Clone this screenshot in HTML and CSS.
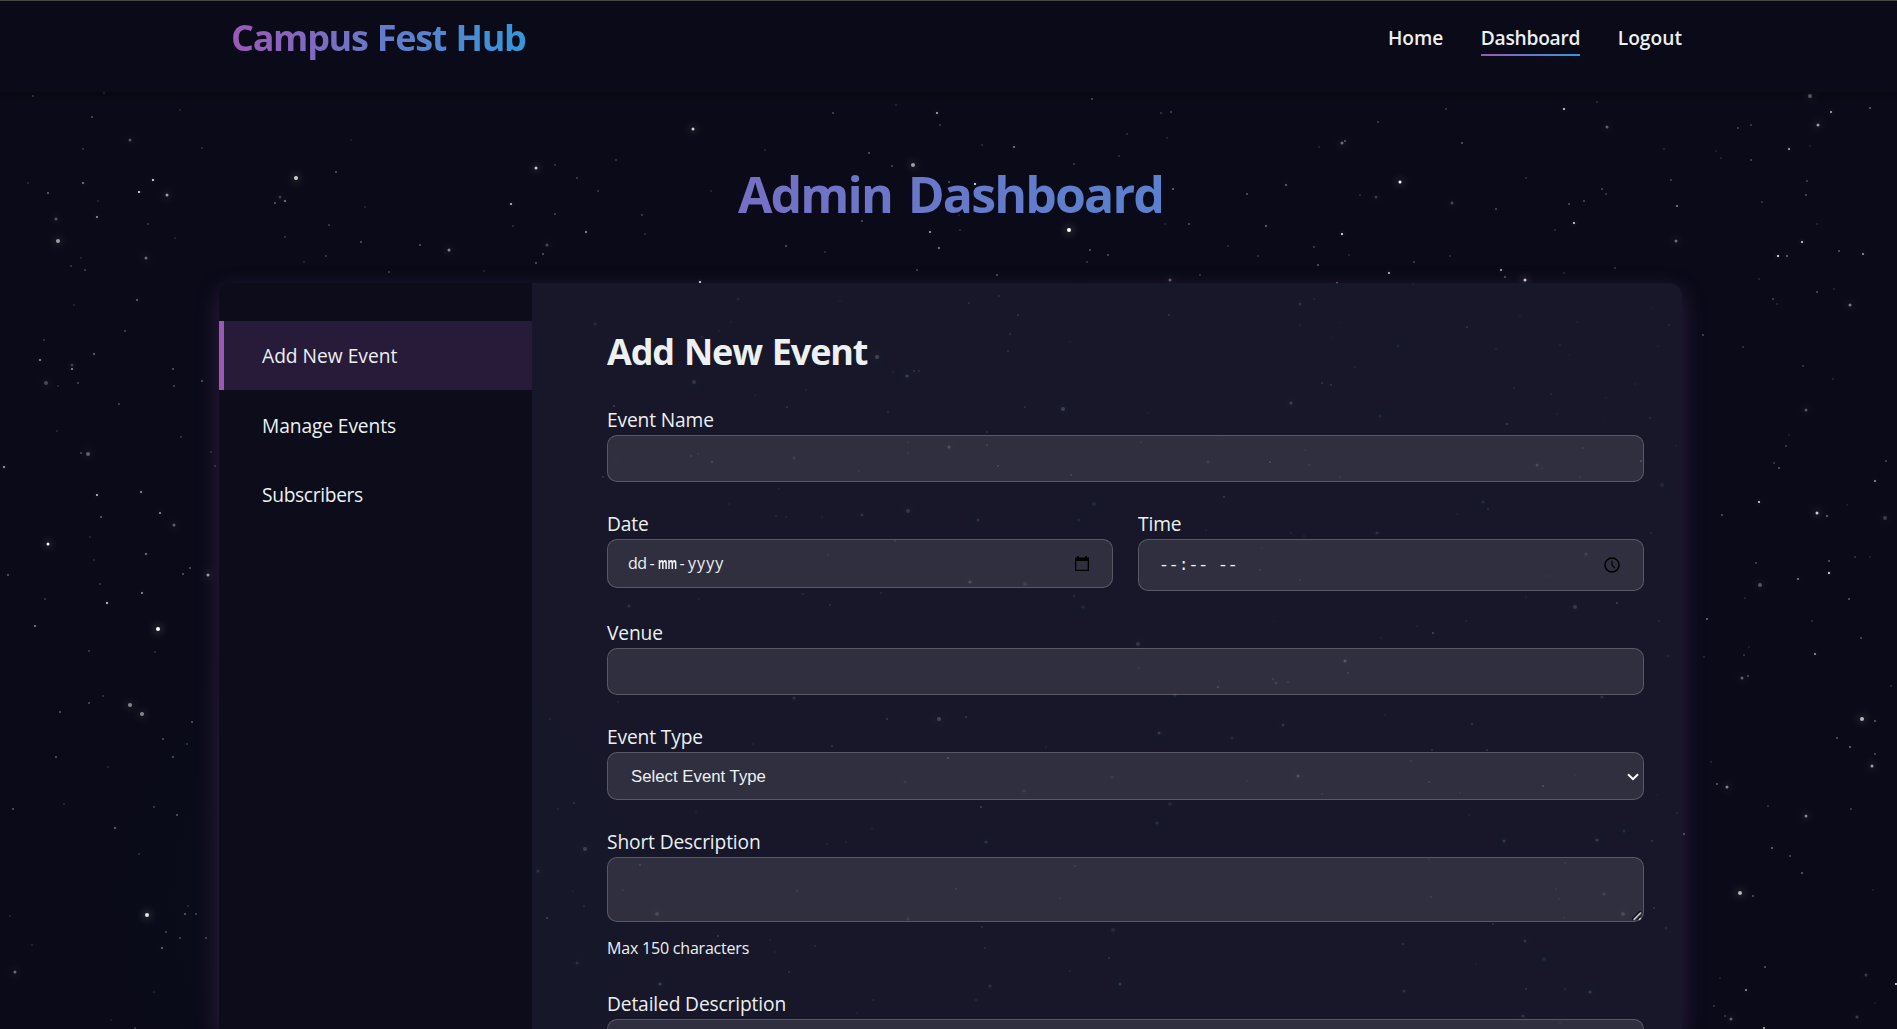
FILE: index.html
```html
<!DOCTYPE html>
<html lang="en">
<head>
<meta charset="utf-8">
<title>Admin Dashboard - Campus Fest Hub</title>
<link rel="stylesheet" href="styles.css">
</head>
<body>
<div class="stars" id="stars" aria-hidden="true"></div>
<header class="site-header">
  <span class="logo">Campus Fest Hub</span>
  <nav class="nav">
    <a class="nav-link nav-home">Home</a>
    <a class="nav-link nav-dash is-active">Dashboard</a>
    <a class="nav-link nav-out">Logout</a>
  </nav>
</header>
<main class="page">
  <h1 class="page-title"><span class="page-title-text">Admin Dashboard</span></h1>
  <div class="dashboard">
    <aside class="sidebar">
      <a class="side-link is-active">Add New Event</a>
      <a class="side-link">Manage Events</a>
      <a class="side-link side-subs">Subscribers</a>
    </aside>
    <section class="content">
      <h2 class="section-title">Add New Event</h2>
      <form class="form">
        <div class="field">
          <label class="label">Event Name</label>
          <input class="control" type="text">
        </div>
        <div class="row">
          <div class="field">
            <label class="label">Date</label>
            <div class="control picker date">
              <span class="date-text"><span class="dd">dd</span><span class="sep">-</span><span class="mm">mm</span><span class="sep">-</span><span class="yy">yyyy</span></span>
              <svg class="cal" viewBox="0 0 14 15"><path d="M3 0v3M11 0v3" stroke="#000" stroke-width="1.6"/><path d="M0 1.6h14V15H0zM1.3 5v8.7h11.4V5z" fill="#000" fill-rule="evenodd"/></svg>
            </div>
          </div>
          <div class="field">
            <label class="label">Time</label>
            <div class="control picker time">
              <span class="time-text">--:-- --</span>
              <svg class="clock" viewBox="0 0 16 16"><circle cx="8" cy="8" r="7" fill="none" stroke="#000" stroke-width="1.5"/><path d="M8 3.8V8.3L11 11" fill="none" stroke="#000" stroke-width="1.2"/></svg>
            </div>
          </div>
        </div>
        <div class="field">
          <label class="label">Venue</label>
          <input class="control" type="text">
        </div>
        <div class="field">
          <label class="label">Event Type</label>
          <div class="control select">
            <span>Select Event Type</span>
            <svg class="chevron" viewBox="0 0 12 8"><path d="M1 1.2L6 6.2L11 1.2" fill="none" stroke="#fff" stroke-width="2"/></svg>
          </div>
        </div>
        <div class="field field-short">
          <label class="label">Short Description</label>
          <div class="area-wrap">
            <textarea class="control area"></textarea>
            <svg class="grip" viewBox="0 0 10 10"><path d="M0 8.5L8.5 0M5.5 8.5L8.5 5.5" stroke="#0c0c14" stroke-width="1.3"/><path d="M1.6 8.9L8.9 1.6M7 8.9L8.9 7" stroke="#c4c4c8" stroke-width="1.5"/></svg>
          </div>
          <small class="hint">Max 150 characters</small>
        </div>
        <div class="field">
          <label class="label">Detailed Description</label>
          <textarea class="control area area-tall"></textarea>
        </div>
      </form>
    </section>
  </div>
</main>
<script src="stars.js"></script>
</body>
</html>
```

FILE: styles.css
```css
* { box-sizing: border-box; }
html { height: 100%; overflow: hidden; }
body {
  margin: 0;
  height: 100%;
  overflow: hidden;
  background:
    radial-gradient(circle at 380px 900px, rgba(12, 34, 44, .2), rgba(12, 34, 44, 0) 320px),
    #0a0a18;
  color: #ecf0f1;
  font-family: "Segoe UI", "Open Sans", "Noto Sans", sans-serif;
}
.stars { position: absolute; inset: 0; overflow: hidden; z-index: -1; }
.star { position: absolute; background: #fff; transform: translate(-50%, -50%); }
.star.round { border-radius: 50%; box-shadow: 0 0 8px 1px rgba(255, 255, 255, .38); }

.site-header {
  display: flex;
  justify-content: space-between;
  height: 92px;
  padding: 13px 215px 0 231px;
  border-top: 1px solid #474747;
  background: #0a0a18;
  box-shadow: 0 2px 7px rgba(6, 6, 14, .4);
}
.logo {
  height: 48px;
  font-size: 36px;
  line-height: 48px;
  letter-spacing: -1.3px;
  word-spacing: 1.2px;
  font-weight: 700;
  white-space: nowrap;
  background: linear-gradient(90deg, #9b59b6, #3498db);
  -webkit-background-clip: text;
  background-clip: text;
  color: transparent;
}
.nav { display: flex; gap: 37.5px; }
.nav-link {
  height: 42px;
  line-height: 48px;
  font-size: 19.2px;
  font-weight: 600;
  white-space: nowrap;
}
.nav-home { letter-spacing: -.05px; }
.nav-dash {
  letter-spacing: -.25px;
  border-bottom: 2px solid;
  border-image: linear-gradient(90deg, #9b59b6, #3498db) 1;
}

.page { padding: 0 215px 0 219px; }
.page-title {
  margin: 0;
  padding-top: 68px;
  height: 191px;
  font-size: 50px;
  line-height: 68px;
  letter-spacing: -1.85px;
  word-spacing: 4.5px;
  font-weight: 700;
  text-align: center;
}
.page-title-text {
  display: block;
  background: linear-gradient(90deg, #9b59b6, #3498db);
  -webkit-background-clip: text;
  background-clip: text;
  color: transparent;
}
.dashboard {
  display: flex;
  height: 746px;
  border-radius: 12px 12px 0 0;
  overflow: hidden;
  background: rgba(26, 26, 46, .8);
  box-shadow: 0 8px 24px rgba(155, 89, 182, .26);
}
.sidebar { width: 313px; flex: none; padding-top: 38px; background: rgba(10, 10, 24, .82); }
.side-link {
  display: block;
  height: 69.4px;
  padding-left: 38px;
  border-left: 5px solid transparent;
  font-size: 19.2px;
  line-height: 70px;
}
.side-link + .side-link { line-height: 71px; letter-spacing: -.1px; }
.side-link.side-subs { line-height: 70px; letter-spacing: -.33px; }
.side-link.is-active { background: rgba(155, 89, 182, .2); border-left-color: #9b59b6; }
.content { flex: 1; padding: 42px 38px 0 75px; }
.section-title {
  margin: 0 0 30px;
  font-size: 36px;
  line-height: 53px;
  height: 52px;
  letter-spacing: -1.15px;
  word-spacing: 1.8px;
  font-weight: 700;
  white-space: nowrap;
}
.form { display: flex; flex-direction: column; gap: 29px; }
.row { display: grid; grid-template-columns: 1fr 1fr; gap: 25px; align-items: start; }
.field { display: flex; flex-direction: column; }
.label { height: 28px; line-height: 26px; font-size: 19.2px; letter-spacing: -.14px; white-space: nowrap; }
.control {
  display: block;
  width: 100%;
  height: 47px;
  margin: 0;
  padding: 0 20px;
  border: 1px solid rgba(255, 255, 255, .2);
  border-radius: 10px;
  background: rgba(255, 250, 248, .11);
  color: #ecf0f1;
  outline: none;
}
.picker { display: flex; align-items: center; justify-content: space-between; }
.date { height: 49px; }
.date-text { display: flex; font-size: 16px; line-height: 20px; font-weight: 500; margin-top: -2px; }
.dd { width: 18px; letter-spacing: -.6px; }
.mm { width: 18px; transform: scaleX(.61); transform-origin: 0 0; font-weight: 700; }
.yy { letter-spacing: 1.1px; }
.sep { width: 12px; text-align: center; }
.cal { width: 14px; height: 15px; margin-right: 3px; }
.time { height: 52px; }
.time-text { font-family: "Liberation Mono", monospace; font-size: 16.4px; white-space: pre; }
.clock { width: 16px; height: 16px; margin-right: 3px; }
.select {
  display: flex;
  align-items: center;
  justify-content: space-between;
  height: 48px;
  padding: 1px 4px 0 23px;
  font-family: "Liberation Sans", Arial, sans-serif;
  font-size: 16.8px;
}
.chevron { width: 12px; height: 8px; margin-top: 1px; }
.area-wrap { position: relative; }
.area { height: 65px; resize: none; }
.area-tall { height: 120px; }
.grip { position: absolute; right: 2px; bottom: 1px; width: 10px; height: 10px; }
.hint { height: 40px; padding-top: 14px; font-size: 16px; line-height: 24px; letter-spacing: -.2px; white-space: nowrap; }
```

FILE: stars.js
```js
// Star field: x, y, size, opacity
const field = `
33 96 1 .7;104 93 2 .15;92 117 1 .9;180 110 1 .4;130 140 3 .3;83 149 1 .6;202 148 1 .5;351 140 1 .3;28 183 1 .5;48 193 2 .4;83 183 2 .5;153 180 2 1;139 192 2 1;167 195 3 .6;98 201 1 .4;97 217 2 .6;56 219 3 .3;58 241 4 .6;148 224 2 .2;175 238 1 .4;146 258 3 .4;81 258 1 .4;71 266 1 .6;85 270 2 .25;296 178 4 .8;336 172 1 1;280 197 3 .2;275 203 1 1;285 201 2 .5;365 207 1 .4;329 225 1 .7;285 237 1 .6;361 242 1 1;420 245 1 1;449 250 3 .5;326 256 1 .7;304 262 1 .4;389 272 1 .7;484 271 1 .4;536 168 3 .8;555 165 1 .6;577 178 1 .7;598 191 1 .6;616 160 2 .2;511 204 2 .8;555 214 1 .8;513 226 1 .5;586 232 2 .6;547 245 3 .25;543 254 1 1;536 263 1 1;137 300 2 .4;74 305 1 .4;125 331 1 .8;44 340 1 .6;
896 105 1 .4;833 113 1 .8;937 113 2 .7;940 125 2 .2;693 129 3 .8;765 150 1 .4;869 153 1 1;982 145 1 .5;1014 147 2 .5;892 166 1 .8;913 165 4 .6;1092 99 1 .9;1161 113 1 .6;1171 112 2 .25;1127 134 1 .5;1167 138 1 .4;1119 156 1 .5;1074 164 1 .6;949 182 2 .3;975 184 2 1;711 191 1 .4;642 215 1 .7;645 234 1 .5;1173 189 2 .4;1247 194 1 1;862 221 1 .9;930 232 2 .7;939 248 2 .5;960 230 1 .5;959 215 1 .4;1069 230 4 1;1165 224 1 .4;1189 224 2 .3;1266 226 2 .4;1090 250 1 1;1108 255 2 .3;1087 262 1 .6;1228 246 1 .5;1258 256 1 .6;786 246 2 .3;825 252 1 .5;917 270 2 .25;997 275 1 .9;1200 275 1 .6;1170 280 3 .35;700 282 2 1;
1378 122 1 .7;1342 143 3 .4;1345 141 1 1;1319 147 1 .4;1446 109 2 .2;1462 143 1 1;1564 109 2 .9;1597 102 2 .15;1607 127 3 .35;1400 182 3 1;1286 185 2 .4;1360 195 1 .5;1376 197 3 .2;1452 203 3 .25;1496 209 2 .3;1526 178 1 .5;1342 234 2 1;1314 247 1 .7;1349 255 1 .4;1318 265 1 1;1389 273 2 .8;1414 262 1 .7;1450 256 1 .5;1501 270 2 .7;1505 277 2 .3;1525 280 3 .8;1337 283 2 .4;1413 284 2 .2;1564 273 1 .4;1555 230 1 .5;1574 223 2 .9;1569 204 1 .9;1584 201 1 .9;1602 189 1 .8;1606 194 2 .2;1615 268 1 .6;1664 149 1 .4;1671 180 1 .7;1677 206 2 .5;1676 241 3 .4;1716 151 1 .3;1721 158 1 .4;1738 128 1 .8;1751 125 1 .7;1751 160 1 .8;1762 202 1 .6;1789 149 2 .7;1810 96 4 .35;1818 125 3 .6;1831 112 2 .7;1870 108 2 .35;1810 146 1 .3;1807 181 2 .25;1806 195 1 .9;1817 224 1 .4;1802 242 2 .9;1778 256 2 1;1787 256 2 .4;1839 251 1 1;1863 254 2 .6;1759 279 1 .4;1834 289 1 .4;1817 292 1 .9;1773 299 2 .25;1777 304 1 .4;1850 305 3 .45;1703 335 1 .8;1743 347 1 .6;
40 360 2 .6;94 354 2 .4;72 365 3 .2;72 369 2 .6;46 383 4 .25;58 386 2 .15;78 383 1 .8;119 404 1 .8;173 369 1 1;174 386 1 .8;202 381 1 1;57 431 1 .4;181 437 1 .6;81 453 1 .8;88 454 4 .35;4 467 2 .7;211 452 1 .5;215 466 1 .6;97 495 2 .8;141 492 2 .6;101 517 2 .35;160 513 2 .6;174 525 3 .35;90 537 1 .4;48 544 3 1;146 554 2 .5;94 560 1 .4;8 575 2 .35;183 574 1 1;190 568 1 1;208 575 3 .6;100 584 1 .6;142 593 2 .6;45 599 1 .6;107 603 2 .9;35 626 2 .5;158 629 4 1;89 651 1 .7;155 652 1 .5;103 696 2 .2;130 705 4 .5;142 714 4 .5;89 703 1 .9;60 712 1 1;192 722 1 1;163 739 1 .9;187 744 1 .6;173 757 2 .3;56 757 1 1;108 767 1 .4;64 804 1 .5;154 807 1 .7;13 809 1 1;177 815 1 1;115 828 2 .4;139 854 1 .5;188 906 1 .4;10 916 1 .4;147 915 4 .9;185 914 2 .35;196 914 1 .8;166 932 1 .8;180 938 2 .25;206 938 1 .8;32 945 1 .4;162 948 2 .4;15 972 3 .4;154 992 1 .3;111 1020 1 .3;135 1028 1 .6;
1803 366 1 .6;1833 379 1 .4;1806 410 3 .3;1789 435 1 .3;1786 446 1 .7;1774 463 2 .2;1779 468 1 1;1886 461 1 .8;1875 481 2 .6;1759 502 2 .9;1722 515 1 1;1817 513 3 .8;1827 516 2 .4;1847 505 1 .3;1885 518 4 .2;1756 563 1 .8;1829 561 1 1;1829 573 2 1;1798 579 2 .5;1760 585 4 .3;1855 557 1 .6;1870 557 1 .3;1745 598 1 .4;1849 599 1 1;1707 619 2 .4;1812 621 1 .5;1861 638 1 .9;1749 647 1 .3;1744 655 1 .6;1704 657 1 .4;1815 654 2 .6;1742 678 3 .35;1748 676 1 .9;1891 686 1 .5;1862 719 4 .7;1875 721 2 .35;1837 738 1 1;1850 747 2 .4;1875 754 1 .9;1872 766 3 .6;1711 762 1 .4;1717 784 2 .35;1727 787 3 .5;1768 806 2 .2;1851 809 1 .7;1806 816 3 .5;1684 834 1 1;1772 848 2 .4;1790 856 1 .9;1802 873 2 .35;1740 893 4 .7;1753 896 1 .9;1873 890 1 .3;1765 967 1 1;1866 975 3 .2;1720 978 1 .3;1746 990 2 .6;1714 1006 1 .6;1725 1016 1 .6;1731 1019 3 .35;1857 1017 3 .2;1764 1028 2 .7;1875 1003 1 .2;1896 984 2 1;
`;

// Stars that sit behind the form panel
const panel = `
738 299 3 .3;840 301 1 .7;999 296 2 .4;969 303 2 .5;1018 315 2 .6;1169 315 2 .6;1080 288 1 .5;731 322 1 .5;1300 304 3 .5;1314 299 2 .3;1520 316 1 .7;1652 308 1 .4;
1300 325 1 .7;1340 323 1 .4;1332 338 1 .4;1432 332 1 .4;1467 327 2 .6;1577 322 2 .2;1669 325 2 .3;1398 346 3 .3;1496 349 1 .9;1560 345 1 1;1569 355 1 .4;1658 346 1 .5;1355 367 1 .9;1454 376 1 .3;1514 388 2 .3;1322 383 2 .6;1331 385 2 .6;1291 403 3 .8;1380 416 3 .3;1551 394 1 1;1606 398 1 .5;1635 384 1 .7;1557 414 2 .2;1507 424 2 .8;1604 422 1 .3;1219 440 1 .5;1208 462 3 .4;1270 462 2 .7;1305 450 1 .6;1309 465 1 1;1340 477 1 .8;1394 448 1 .5;1537 465 3 .6;1542 468 1 .7;1583 448 1 1;1580 477 1 .8;1641 461 2 .8;1224 497 2 .7;1483 502 3 .4;
1650 418 2 .4;1662 485 4 .3;1676 446 2 .2;1651 533 2 .3;1659 621 2 .3;1668 656 3 .25;1657 795 1 .4;1652 841 2 .6;1654 908 2 .6;1666 928 3 .3;
595 324 3 .4;719 331 1 .7;702 337 2 .5;877 357 4 .9;907 376 3 .8;914 371 2 .6;919 371 2 .5;694 382 4 .6;755 395 1 .6;806 390 1 .9;787 407 2 .6;888 412 2 .4;1063 409 4 .8;1025 407 2 .5;1148 413 1 .5;1008 351 2 .5;1010 334 2 .5;1070 342 1 .5;614 406 2 .8;893 372 1 .9;949 447 3 .8;987 445 2 .6;987 432 2 .4;998 466 2 .6;1071 475 2 .6;908 442 1 .8;908 453 1 .8;1141 442 1 .9;859 471 1 .8;794 458 3 .4;712 462 2 .7;698 454 1 .8;691 456 2 .4;616 462 1 .5;603 477 2 .6;779 489 1 .8;729 504 1 .7;862 515 3 .5;908 511 4 .6;978 520 3 .5;1094 504 4 .35;1079 520 3 .3;822 517 1 .7;786 517 2 .3;776 516 2 .3;895 541 2 .5;828 555 1 .8;970 582 3 .8;1025 584 4 .4;881 593 2 .4;803 594 2 .4;830 605 2 .5;1074 596 2 .5;1083 607 3 .4;629 606 3 .5;699 599 1 .7;
1377 533 3 .5;1488 509 2 .4;1457 514 1 .7;1291 533 1 .8;1304 536 1 .9;1206 530 1 .6;1586 554 3 .5;1549 576 1 .6;1262 548 2 .2;1260 570 2 .5;1300 580 2 .4;1575 607 4 .7;1617 603 2 .8;1526 597 1 .7;1433 633 2 1;1466 621 1 .9;1417 626 1 .8;1381 638 1 .8;1138 644 4 .6;1274 621 1 .4;1345 661 3 .9;1348 673 2 .6;1139 668 1 .9;1218 687 2 .8;1219 681 1 .5;1273 679 2 .5;1276 683 3 .4;1288 682 2 .4;1175 695 3 .4;1602 697 3 .5;1385 715 1 .8;1283 725 3 .6;1472 724 2 .6;1159 733 3 .7;1232 738 3 .4;1432 750 2 .5;1487 750 2 .6;1411 761 2 .5;1298 776 3 .8;1247 781 1 .7;1322 794 1 .8;1429 782 2 .5;1460 793 1 1;1543 786 2 .8;1575 775 1 .7;1170 804 4 .3;1157 823 3 .5;1469 815 1 .7;1677 813 1 1;
794 698 3 .5;887 719 2 .7;939 719 4 .9;966 717 2 .7;618 702 1 .9;753 744 1 .8;832 746 2 .6;1046 747 1 .8;948 758 2 .9;1112 777 3 .3;905 782 3 .3;1024 791 3 .4;653 773 3 .5;696 812 1 .8;981 807 2 .8;872 829 1 .8;846 842 1 .9;986 842 3 .6;827 844 2 .4;640 865 2 .6;1075 866 2 .4;956 889 2 .4;797 891 3 .3;657 914 4 .6;623 890 2 .3;908 919 3 .4;1060 898 1 .8;1113 930 4 .35;982 927 2 .5;718 936 2 .7;815 946 2 .4;770 940 1 .8;775 952 1 .7;985 948 2 .5;1109 958 2 .6;789 972 2 .5;660 984 3 .8;990 986 3 .5;1120 984 3 .7;873 1000 2 .3;976 1000 2 .4;1070 971 1 .9;857 1013 1 .7;
1504 841 3 .7;1597 840 3 .7;1624 831 3 .4;1429 859 1 .7;1565 863 1 .8;1556 889 1 .8;1559 899 1 .8;1604 894 3 .5;1623 914 4 .6;1564 918 1 .7;1431 897 2 .4;1525 941 3 .6;1544 959 4 .3;1476 964 1 .7;1526 989 2 .6;1565 989 3 .2;1590 992 3 .7;1404 991 3 .5;1523 1016 3 .6;1560 1023 1 .7;1403 944 2 .6;1493 924 2 .5;
585 849 4 .8;538 871 3 .5;547 918 2 .9;577 963 3 .5;574 803 2 .6;558 809 1 .8;550 719 2 .3;573 891 1 .6;584 906 2 .4;
`;

const host = document.getElementById("stars");
(field + panel).split(";").forEach((entry) => {
  const [x, y, size, alpha] = entry.trim().split(/\s+/).map(Number);
  if (!size) return;
  const star = document.createElement("i");
  star.className = size > 1 ? "star round" : "star";
  star.style.cssText = `left:${x - 0.5}px;top:${y - 0.5}px;width:${size}px;height:${size}px;opacity:${alpha}`;
  if (size === 2) star.style.boxShadow = "0 0 4px rgba(255,255,255,.4)";
  host.appendChild(star);
});
```
